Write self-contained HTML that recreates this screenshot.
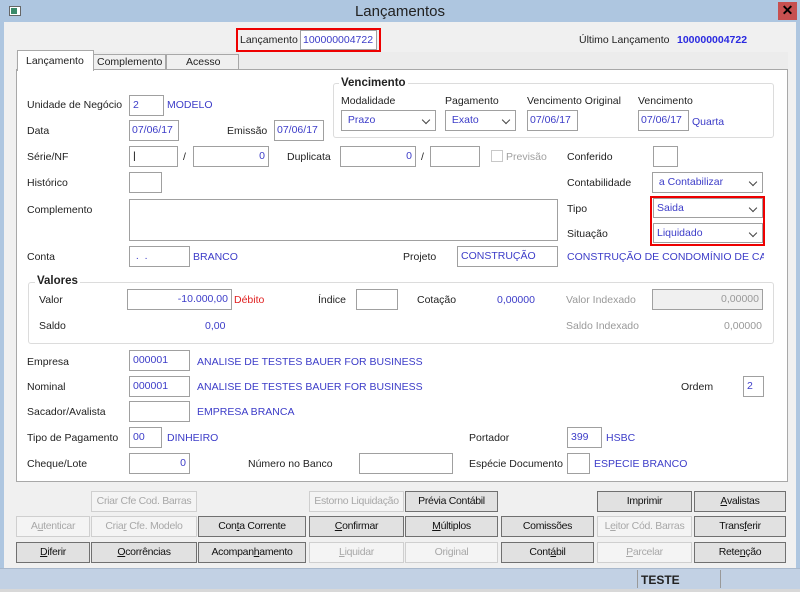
<!DOCTYPE html>
<html><head><meta charset="utf-8"><style>
*{box-sizing:border-box;margin:0;padding:0}
body{width:800px;height:592px;overflow:hidden;background:#f0f0f0;font-family:"Liberation Sans",sans-serif;font-size:10.5px;color:#222;position:relative}
.a{position:absolute;white-space:nowrap}
.l{position:absolute;white-space:nowrap;line-height:13px;top:0}
.i{position:absolute;background:#fff;border:1px solid #a0a0a0;color:#3c3cc8;padding:0 3px;line-height:19px;height:21px;overflow:hidden;white-space:nowrap}
.r{text-align:right}
.b{color:#3c3cc8}
.s:after{content:"";position:absolute;right:6px;top:6px;width:5px;height:5px;border-right:1.5px solid #444;border-bottom:1.5px solid #444;transform:rotate(45deg)}
.btn{position:absolute;height:21px;border:1px solid #707070;background:#e1e1e1;text-align:center;line-height:19px;font-size:10.5px;letter-spacing:-0.3px;color:#111}
.d{border-color:#cfcfcf;background:#f4f4f4;color:#a8a8a8}
.g{position:absolute;border:1px solid #dcdcdc;border-radius:3px}
.gt{position:absolute;font-weight:bold;background:#fff;padding:0 2px;font-size:11.5px}
</style></head><body>
<div class="a" style="left:0;top:0;width:800px;height:592px;border-left:4px solid #aec6e0;border-right:4px solid #aec6e0"></div>
<div class="a" style="left:0;top:0;width:800px;height:22px;background:#aec6e0"></div>
<div class="a" style="left:9px;top:6px;width:12px;height:10px;background:#fff;border:1px solid #666"><div style="width:6px;height:6px;background:#3a8a6a;margin:1px"></div></div>
<div class="a" style="left:0;top:3px;width:800px;text-align:center;font-size:15px;color:#222">Lançamentos</div>
<div class="a" style="left:778px;top:2px;width:19px;height:18px;background:#c75050;color:#000;font-weight:bold;text-align:center;font-size:14px;line-height:17px">✕</div>

<div class="a" style="left:236px;top:28px;width:145px;height:24px;border:2px solid #e00"></div>
<div class="l" style="left:240px;top:34px">Lançamento</div>
<div class="i" style="left:300px;top:30px;width:77px;height:20px;line-height:18px;padding:0 2px">100000004722</div>
<div class="l" style="left:579px;top:34px">Último Lançamento</div>
<div class="l" style="left:677px;top:34px;color:#2a2ae0;font-weight:bold">100000004722</div>

<div class="a" style="left:16px;top:52px;width:772px;height:18px;background:#ececec"></div>
<div class="a" style="left:16px;top:69px;width:772px;height:413px;background:#fff;border:1px solid #a8a8a8"></div>
<div class="a" style="left:17px;top:50px;width:77px;height:21px;background:#fff;border:1px solid #a8a8a8;border-bottom:none;padding:4px 0 0 8px">Lançamento</div>
<div class="a" style="left:93px;top:54px;width:73px;height:16px;background:#f0f0f0;border:1px solid #a8a8a8;padding:1px 0 0 3px">Complemento</div>
<div class="a" style="left:166px;top:54px;width:73px;height:16px;background:#f0f0f0;border:1px solid #a8a8a8;padding:1px 0 0 19px">Acesso</div>

<div class="g" style="left:333px;top:83px;width:441px;height:55px"></div>
<div class="gt" style="left:339px;top:77px">Vencimento</div>
<div class="l" style="left:341px;top:95px">Modalidade</div>
<div class="i s" style="left:341px;top:110px;width:95px">&nbsp;Prazo</div>
<div class="l" style="left:445px;top:95px">Pagamento</div>
<div class="i s" style="left:445px;top:110px;width:71px">&nbsp;Exato</div>
<div class="l" style="left:527px;top:95px">Vencimento Original</div>
<div class="i" style="left:527px;top:110px;width:51px;padding:0 2px">07/06/17</div>
<div class="l" style="left:638px;top:95px">Vencimento</div>
<div class="i" style="left:638px;top:110px;width:51px;padding:0 2px">07/06/17</div>
<div class="l b" style="left:692px;top:116px">Quarta</div>

<div class="l" style="left:27px;top:99px">Unidade de Negócio</div>
<div class="i" style="left:129px;top:95px;width:35px">2</div>
<div class="l b" style="left:167px;top:99px">MODELO</div>
<div class="l" style="left:27px;top:125px">Data</div>
<div class="i" style="left:129px;top:120px;width:50px;padding:0 2px">07/06/17</div>
<div class="l" style="left:227px;top:125px">Emissão</div>
<div class="i" style="left:274px;top:120px;width:50px;padding:0 2px">07/06/17</div>

<div class="l" style="left:27px;top:151px">Série/NF</div>
<div class="i" style="left:129px;top:146px;width:49px;color:#000">|</div>
<div class="l" style="left:183px;top:151px">/</div>
<div class="i r" style="left:193px;top:146px;width:76px">0</div>
<div class="l" style="left:287px;top:151px">Duplicata</div>
<div class="i r" style="left:340px;top:146px;width:76px">0</div>
<div class="l" style="left:421px;top:151px">/</div>
<div class="i" style="left:430px;top:146px;width:50px"></div>
<div class="a" style="left:491px;top:150px;width:12px;height:12px;border:1px solid #c8c8c8"></div>
<div class="l" style="left:506px;top:151px;color:#a0a0a0">Previsão</div>
<div class="l" style="left:567px;top:151px">Conferido</div>
<div class="i" style="left:653px;top:146px;width:25px"></div>

<div class="l" style="left:27px;top:177px">Histórico</div>
<div class="i" style="left:129px;top:172px;width:33px"></div>
<div class="l" style="left:567px;top:177px">Contabilidade</div>
<div class="i s" style="left:652px;top:172px;width:111px">&nbsp;a Contabilizar</div>

<div class="l" style="left:27px;top:204px">Complemento</div>
<div class="i" style="left:129px;top:199px;width:429px;height:42px"></div>
<div class="l" style="left:567px;top:203px">Tipo</div>
<div class="l" style="left:567px;top:228px">Situação</div>
<div class="a" style="left:650px;top:196px;width:115px;height:50px;border:2px solid #e00"></div>
<div class="i s" style="left:653px;top:198px;width:110px;height:20px;line-height:18px">Saida</div>
<div class="i s" style="left:653px;top:223px;width:110px;height:20px;line-height:18px">Liquidado</div>

<div class="l" style="left:27px;top:251px">Conta</div>
<div class="i" style="left:129px;top:246px;width:61px">&nbsp;.&nbsp; .</div>
<div class="l b" style="left:193px;top:251px">BRANCO</div>
<div class="l" style="left:403px;top:251px">Projeto</div>
<div class="i" style="left:457px;top:246px;width:101px">CONSTRUÇÃO</div>
<div class="l b" style="left:567px;top:251px;width:197px;overflow:hidden">CONSTRUÇÃO DE CONDOMÍNIO DE CASAS</div>

<div class="g" style="left:28px;top:282px;width:746px;height:62px"></div>
<div class="gt" style="left:35px;top:275px">Valores</div>
<div class="l" style="left:39px;top:294px">Valor</div>
<div class="i r" style="left:127px;top:289px;width:105px">-10.000,00</div>
<div class="l" style="left:234px;top:294px;color:#e02020">Débito</div>
<div class="l" style="left:318px;top:294px">Índice</div>
<div class="i" style="left:356px;top:289px;width:42px"></div>
<div class="l" style="left:417px;top:294px">Cotação</div>
<div class="l b" style="left:497px;top:294px">0,00000</div>
<div class="l" style="left:566px;top:294px;color:#999">Valor Indexado</div>
<div class="i r" style="left:652px;top:289px;width:111px;background:#f0f0f0;color:#999">0,00000</div>
<div class="l" style="left:39px;top:320px">Saldo</div>
<div class="l b" style="left:205px;top:320px">0,00</div>
<div class="l" style="left:566px;top:320px;color:#999">Saldo Indexado</div>
<div class="l" style="left:724px;top:320px;color:#999">0,00000</div>

<div class="l" style="left:27px;top:356px">Empresa</div>
<div class="i" style="left:129px;top:350px;width:61px">000001</div>
<div class="l b" style="left:197px;top:356px">ANALISE DE TESTES BAUER FOR BUSINESS</div>
<div class="l" style="left:27px;top:381px">Nominal</div>
<div class="i" style="left:129px;top:376px;width:61px">000001</div>
<div class="l b" style="left:197px;top:381px">ANALISE DE TESTES BAUER FOR BUSINESS</div>
<div class="l" style="left:681px;top:381px">Ordem</div>
<div class="i" style="left:743px;top:376px;width:21px">2</div>
<div class="l" style="left:27px;top:406px">Sacador/Avalista</div>
<div class="i" style="left:129px;top:401px;width:61px"></div>
<div class="l b" style="left:197px;top:406px">EMPRESA BRANCA</div>
<div class="l" style="left:27px;top:432px">Tipo de Pagamento</div>
<div class="i" style="left:129px;top:427px;width:33px">00</div>
<div class="l b" style="left:167px;top:432px">DINHEIRO</div>
<div class="l" style="left:469px;top:432px">Portador</div>
<div class="i" style="left:567px;top:427px;width:35px">399</div>
<div class="l b" style="left:606px;top:432px">HSBC</div>
<div class="l" style="left:27px;top:458px">Cheque/Lote</div>
<div class="i r" style="left:129px;top:453px;width:61px">0</div>
<div class="l" style="left:248px;top:458px">Número no Banco</div>
<div class="i" style="left:359px;top:453px;width:94px"></div>
<div class="l" style="left:469px;top:458px">Espécie Documento</div>
<div class="i" style="left:567px;top:453px;width:23px"></div>
<div class="l b" style="left:594px;top:458px">ESPECIE BRANCO</div>

<div class="btn d" style="left:91px;top:491px;width:106px">Criar Cfe Cod. Barras</div>
<div class="btn d" style="left:309px;top:491px;width:95px">Estorno Liquidação</div>
<div class="btn" style="left:405px;top:491px;width:93px">Prévia Contábil</div>
<div class="btn" style="left:597px;top:491px;width:95px">Imprimir</div>
<div class="btn" style="left:694px;top:491px;width:92px"><u>A</u>valistas</div>

<div class="btn d" style="left:16px;top:516px;width:74px">A<u>u</u>tenticar</div>
<div class="btn d" style="left:91px;top:516px;width:106px">Cria<u>r</u> Cfe. Modelo</div>
<div class="btn" style="left:198px;top:516px;width:108px">Con<u>t</u>a Corrente</div>
<div class="btn" style="left:309px;top:516px;width:95px"><u>C</u>onfirmar</div>
<div class="btn" style="left:405px;top:516px;width:93px"><u>M</u>últiplos</div>
<div class="btn" style="left:501px;top:516px;width:93px">Comissões</div>
<div class="btn d" style="left:597px;top:516px;width:95px">L<u>e</u>itor Cód. Barras</div>
<div class="btn" style="left:694px;top:516px;width:92px">Trans<u>f</u>erir</div>

<div class="btn" style="left:16px;top:542px;width:74px"><u>D</u>iferir</div>
<div class="btn" style="left:91px;top:542px;width:106px"><u>O</u>corrências</div>
<div class="btn" style="left:198px;top:542px;width:108px">Acompan<u>h</u>amento</div>
<div class="btn d" style="left:309px;top:542px;width:95px"><u>L</u>iquidar</div>
<div class="btn d" style="left:405px;top:542px;width:93px">Original</div>
<div class="btn" style="left:501px;top:542px;width:93px">Cont<u>á</u>bil</div>
<div class="btn d" style="left:597px;top:542px;width:95px"><u>P</u>arcelar</div>
<div class="btn" style="left:694px;top:542px;width:92px">Rete<u>n</u>ção</div>

<div class="a" style="left:0;top:568px;width:800px;height:21px;background:#c2d1e4;border-top:1px solid #a8b8cc"></div>
<div class="a" style="left:637px;top:570px;width:84px;height:18px;border-left:1px solid #999;border-right:1px solid #999;font-weight:bold;padding:3px 0 0 3px;font-size:12px">TESTE</div>
<div class="a" style="left:0;top:589px;width:800px;height:3px;background:#d8d8d8"></div>
</body></html>
